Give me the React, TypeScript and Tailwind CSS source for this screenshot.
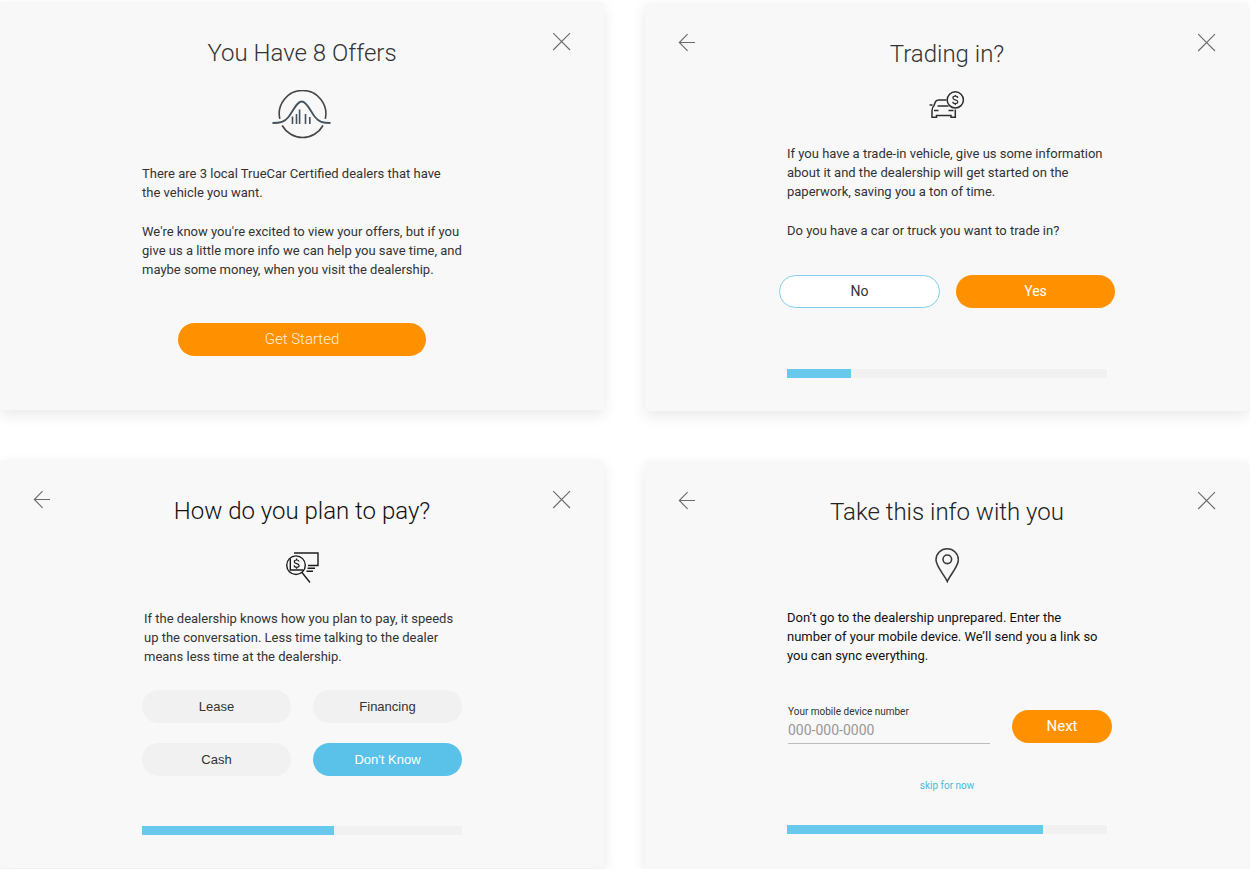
import type { ReactNode } from "react";

function ArrowIcon() {
  return (
    <svg width="20" height="20" viewBox="0 0 20 20" fill="none" stroke="#6b6b6b" strokeWidth="1.1" aria-hidden="true">
      <path d="M2.3 9.500H18M10.600 1.200L2.300 9.500L10.600 17.800" />
    </svg>
  );
}

function CloseIcon() {
  return (
    <svg width="20" height="20" viewBox="0 0 20 20" fill="none" stroke="#6b6b6b" strokeWidth="1.1" aria-hidden="true">
      <path d="M1.200 1.200L18 18M18 1.200L1.200 18" />
    </svg>
  );
}

function CurveIcon() {
  return (
    <svg width="60" height="49" viewBox="0 0 60 49" fill="none" aria-hidden="true">
      <g stroke="#454545" strokeWidth="1.600">
        <path d="M7.800 28.800A23.300 23.300 0 1 1 53.300 28.800" />
        <path d="M10.200 35.500A23.300 23.300 0 0 0 51 35.500" />
      </g>
      <g stroke="#43525c" strokeWidth="1.800">
        <path d="M0.500 33C8.500 33 12.500 32 16.500 27C21 21.500 24.500 11.500 29.800 11.500C35 11.500 38.500 21.500 43 27C47 32 50.500 33 58.500 33" />
        <path d="M20.500 26.500V34M24.500 24V34M27.600 19.500V34M33.500 24V34M37.800 27V34" strokeWidth="1.600" />
      </g>
    </svg>
  );
}

function CarIcon() {
  return (
    <svg width="36" height="28" viewBox="0 0 36 28" fill="none" stroke="#2e2e2e" strokeWidth="1.500" aria-hidden="true">
      <path d="M17.500 9H9.500C7 9 6.300 10.500 5 14.500C3.500 16 3 17.500 3 19.500V26.300H7.500V24.500H22V26.300H26.300V18.500" />
      <path d="M0.500 14H3.500M8.500 15H19.500M5 19.500H9.500M19.500 19.500H24.500" />
      <circle cx="26.300" cy="8.900" r="8.100" />
      <path d="M28.700 7C28.700 5.800 27.600 5.200 26.300 5.200C24.900 5.200 23.900 5.900 23.900 7C23.900 9.500 28.800 8.100 28.800 10.800C28.800 11.900 27.700 12.600 26.300 12.600C24.800 12.600 23.800 11.900 23.800 10.700M26.300 4V5.400M26.300 12.400V14" strokeWidth="1.200" />
    </svg>
  );
}

function PayIcon() {
  return (
    <svg width="34" height="33" viewBox="0 0 34 33" fill="none" stroke="#1c1c1c" strokeWidth="1.400" aria-hidden="true">
      <circle cx="11" cy="14.200" r="9.300" />
      <path d="M9 2H33V14.500H23M22.500 17.300H30M21.500 20.300H28" />
      <path d="M5.300 7.500V19H18.500M17 21.500L25 31.500" />
      <path d="M14 10.500C13.800 9.500 12.900 9 11.600 9C10.300 9 9.300 9.600 9.300 10.800C9.300 13.200 14.100 11.900 14.100 14.500C14.100 15.600 13.100 16.300 11.600 16.300C10.200 16.300 9.200 15.600 9.100 14.400M11.600 7.500V9M11.600 16.300V17.800" strokeWidth="1.200" />
    </svg>
  );
}

function PinIcon() {
  return (
    <svg width="24" height="35" viewBox="0 0 24 35" fill="none" stroke="#3c3c3c" strokeWidth="1.600" aria-hidden="true">
      <path d="M12.300 33.500C9.500 27 1 18.500 1 11.800A11.200 11 0 0 1 23.400 11.800C23.400 18.500 15 27 12.300 33.500Z" />
      <circle cx="12.300" cy="11.300" r="4.300" />
    </svg>
  );
}

function Card({ title, titleClass, back, children }: { title: string; titleClass: string; back?: boolean; children: ReactNode }) {
  return (
    <section className="flex min-h-[408px] flex-col items-center rounded-[3px] bg-[#f8f8f8] shadow-[0_5px_15px_rgba(0,0,0,0.09)]">
      <header className="flex w-full items-start justify-between px-8 pt-[30px]">
        {back ? (
          <button type="button" aria-label="Back" className="size-5">
            <ArrowIcon />
          </button>
        ) : (
          <span className="size-5" />
        )}
        <h2 className={`pt-[7px] text-[24px] leading-[28px] font-light ${titleClass}`}>{title}</h2>
        <button type="button" aria-label="Close" className="size-5">
          <CloseIcon />
        </button>
      </header>
      {children}
    </section>
  );
}

function Progress({ value, label }: { value: number; label: string }) {
  return (
    <div role="progressbar" aria-label={label} aria-valuenow={value} aria-valuemin={0} aria-valuemax={100} className="h-[9px] w-80 bg-[#f1f1f1]">
      <div className="h-full bg-[#69c9ec]" style={{ width: `${value}%` }} />
    </div>
  );
}

const payOptions = ["Lease", "Financing", "Cash", "Don't Know"];

export default function App() {
  return (
    <main className="flex gap-[41px] overflow-x-hidden bg-white pr-px font-['Roboto','Liberation_Sans',sans-serif] text-[13px] leading-[19px] text-[#333]">
      <div className="flex flex-1 flex-col gap-[50px] pt-[2px]">
        <Card title="You Have 8 Offers" titleClass="text-[#333]">
          <div className="mt-[23px]">
            <CurveIcon />
          </div>
          <div className="mt-[25px] flex w-80 flex-col gap-5 whitespace-nowrap">
            <p>There are 3 local TrueCar Certified dealers that have<br />the vehicle you want.</p>
            <p>We're know you're excited to view your offers, but if you<br />give us a little more info we can help you save time, and<br />maybe some money, when you visit the dealership.</p>
          </div>
          <button type="button" className="mt-11 h-[33px] w-[248px] rounded-full bg-[#ff9100] text-[15px] font-light text-[#fff0d8]">Get Started</button>
        </Card>

        <Card title="How do you plan to pay?" titleClass="text-[#111]" back>
          <div className="mt-[26px]">
            <PayIcon />
          </div>
          <p className="mt-[25px] w-80 pl-[2px] whitespace-nowrap">If the dealership knows how you plan to pay, it speeds<br />up the conversation. Less time talking to the dealer<br />means less time at the dealership.</p>
          <div className="mt-6 grid w-80 grid-cols-2 gap-x-[22px] gap-y-5 font-['Liberation_Sans',Arial,sans-serif]">
            {payOptions.map((option) => (
              <button
                key={option}
                type="button"
                className={`h-[33px] rounded-full ${option === "Don't Know" ? "bg-[#5ac2e9] text-white" : "bg-[#f1f1f1]"}`}
              >
                {option}
              </button>
            ))}
          </div>
          <div className="mt-[50px]">
            <Progress value={60} label="Payment step" />
          </div>
        </Card>
      </div>

      <div className="flex flex-1 flex-col gap-[50px] pt-[3px]">
        <Card title="Trading in?" titleClass="text-[#333]" back>
          <div className="mt-[23px]">
            <CarIcon />
          </div>
          <div className="mt-[25px] flex w-80 flex-col gap-5 whitespace-nowrap">
            <p>If you have a trade-in vehicle, give us some information<br />about it and the dealership will get started on the<br />paperwork, saving you a ton of time.</p>
            <p>Do you have a car or truck you want to trade in?</p>
          </div>
          <div className="mt-[35px] flex w-[336px] gap-4 text-[14px]">
            <button type="button" className="h-[33px] flex-1 rounded-full border border-[#7fd0ef] bg-white">No</button>
            <button type="button" className="h-[33px] flex-1 rounded-full bg-[#ff9100] text-white">Yes</button>
          </div>
          <div className="mt-[61px]">
            <Progress value={20} label="Trade-in step" />
          </div>
        </Card>

        <Card title="Take this info with you" titleClass="text-[#222]" back>
          <div className="mt-[22px]">
            <PinIcon />
          </div>
          <p className="mt-[25px] w-80 whitespace-nowrap text-[#111]">Don’t go to the dealership unprepared. Enter the<br />number of your mobile device. We’ll send you a link so<br />you can sync everything.</p>
          <form className="mt-10 flex w-[330px] items-start justify-between pl-[6px]" onSubmit={(event) => event.preventDefault()}>
            <div className="flex w-[202px] flex-col border-b border-[#bdbdbd]">
              <label htmlFor="phone" className="text-[10px] leading-[14px]">Your mobile device number</label>
              <input id="phone" type="tel" placeholder="000-000-0000" className="h-6 w-full bg-transparent pb-[3px] text-[14px] outline-none placeholder:text-[#999]" />
            </div>
            <button type="submit" className="mt-[5px] h-[33px] w-[100px] rounded-full bg-[#ff9100] text-[15px] text-white">Next</button>
          </form>
          <a href="#skip" className="mt-8 text-[10px] text-[#4bb8e0]">skip for now</a>
          <div className="mt-[30px]">
            <Progress value={80} label="Mobile number step" />
          </div>
        </Card>
      </div>
    </main>
  );
}
